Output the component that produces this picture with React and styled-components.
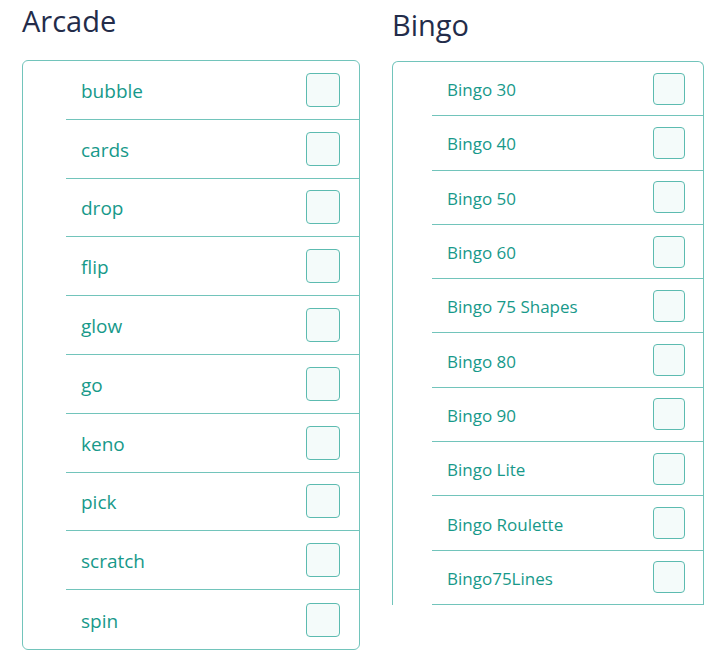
import React from 'react';
import styled, { createGlobalStyle } from 'styled-components';

const GlobalStyle = createGlobalStyle`
  body {
    margin: 0;
    background: #ffffff;
    font-family: "Open Sans", "Noto Sans", sans-serif;
  }
`;

const Page = styled.div`
  display: flex;
  flex-direction: row;
  align-items: flex-start;
  gap: 32px;
  padding: 0 0 0 22px;
`;

const Column = styled.section`
  display: flex;
  flex-direction: column;
  width: ${(props) => props.width}px;
`;

const Heading = styled.h2`
  margin: 0;
  height: ${(props) => props.height}px;
  padding-top: ${(props) => props.offset}px;
  box-sizing: border-box;
  font-size: 29px;
  font-weight: 400;
  line-height: 1;
  color: #232c4a;
`;

const Panel = styled.ul`
  list-style: none;
  margin: 0;
  padding: 0;
  border: 1px solid #72c4bb;
  border-radius: ${(props) => (props.open ? '6px 6px 0 0' : '6px')};
  border-bottom: ${(props) => (props.open ? 'none' : '1px solid #72c4bb')};
`;

const Row = styled.li`
  display: flex;
  align-items: center;
  justify-content: space-between;
  box-sizing: border-box;
  height: ${(props) => props.height}px;
  margin-left: ${(props) => props.indent}px;
  padding: 0 ${(props) => props.right}px 0 ${(props) => props.textLeft}px;
  border-bottom: 1px solid #72c4bb;

  &:last-child {
    border-bottom: ${(props) => (props.open ? '1px solid #72c4bb' : 'none')};
  }
`;

const Label = styled.span`
  font-size: ${(props) => props.size}px;
  color: #17998a;
  padding-top: 2px;
`;

const Check = styled.span`
  display: block;
  box-sizing: border-box;
  width: ${(props) => props.size}px;
  height: ${(props) => props.size}px;
  border: 1.5px solid #5cbbb0;
  border-radius: 4px;
  background: #f4fbfa;
`;

const arcade = ['bubble', 'cards', 'drop', 'flip', 'glow', 'go', 'keno', 'pick', 'scratch', 'spin'];
const bingo = [
  'Bingo 30',
  'Bingo 40',
  'Bingo 50',
  'Bingo 60',
  'Bingo 75 Shapes',
  'Bingo 80',
  'Bingo 90',
  'Bingo Lite',
  'Bingo Roulette',
  'Bingo75Lines',
];

function Category({ title, items, width, headingHeight, headingOffset, rowHeight, indent, textLeft, right, fontSize, boxSize, open }) {
  return (
    <Column width={width}>
      <Heading height={headingHeight} offset={headingOffset}>{title}</Heading>
      <Panel open={open}>
        {items.map((name) => (
          <Row key={name} height={rowHeight} indent={indent} textLeft={textLeft} right={right} open={open}>
            <Label size={fontSize}>{name}</Label>
            <Check size={boxSize} />
          </Row>
        ))}
      </Panel>
    </Column>
  );
}

export default function App() {
  return (
    <>
      <GlobalStyle />
      <Page>
        <Category
          title="Arcade"
          items={arcade}
          width={338}
          headingHeight={60}
          headingOffset={6}
          rowHeight={58.8}
          indent={43}
          textLeft={15}
          right={19}
          fontSize={19}
          boxSize={34}
        />
        <Category
          title="Bingo"
          items={bingo}
          width={312}
          headingHeight={61}
          headingOffset={10}
          rowHeight={54.3}
          indent={39}
          textLeft={15}
          right={18}
          fontSize={17}
          boxSize={32}
          open
        />
      </Page>
    </>
  );
}
